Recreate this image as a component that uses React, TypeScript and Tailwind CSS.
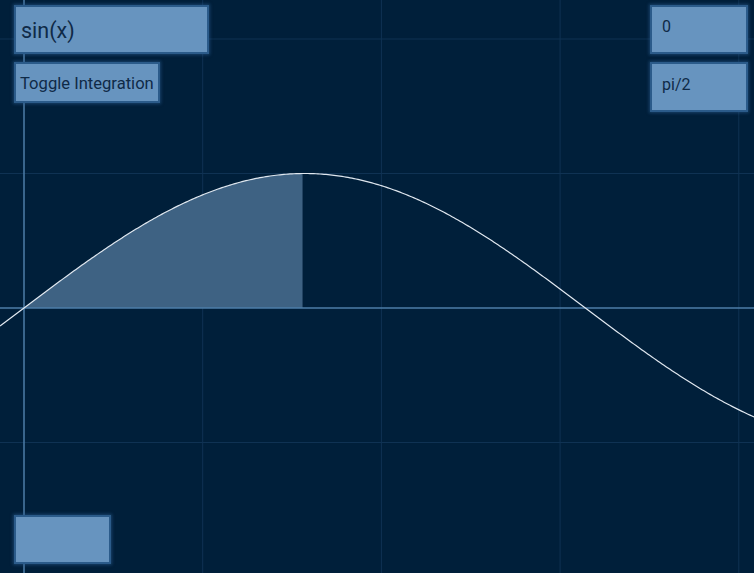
import { useMemo, useState } from "react";

const W = 754;
const H = 573;
const OX = 24;
const OY = 308;
const SX = 178.7;
const SY = 134.5;

const toPx = (x: number, y: number) => [OX + x * SX, OY - y * SY] as const;

function Graph({ integrate }: { integrate: boolean }) {
  const curve = useMemo(() => {
    const pts: string[] = [];
    for (let px = 0; px <= W; px += 2) {
      const x = (px - OX) / SX;
      const [, py] = toPx(x, Math.sin(x));
      pts.push(`${px},${py.toFixed(2)}`);
    }
    return pts.join(" ");
  }, []);

  // shaded area under the curve between the two bounds
  const area = useMemo(() => {
    const a = 0;
    const b = Math.PI / 2 - 0.012;
    const pts: string[] = [];
    const n = 60;
    for (let i = 0; i <= n; i++) {
      const x = a + ((b - a) * i) / n;
      const [px, py] = toPx(x, Math.sin(x));
      pts.push(`${px.toFixed(2)},${py.toFixed(2)}`);
    }
    const [bx] = toPx(b, 0);
    const [ax] = toPx(a, 0);
    return `${pts.join(" ")} ${bx},${OY} ${ax},${OY}`;
  }, []);

  const vlines = [-1, 1, 2, 3, 4].map((k) => OX + k * SX);
  const hlines = [-2, -1, 1, 2].map((k) => OY - k * SY);

  return (
    <svg width={W} height={H} viewBox={`0 0 ${W} ${H}`} className="absolute inset-0">
      <rect width={W} height={H} fill="#001f3a" />
      {vlines.map((x) => (
        <line key={`v${x}`} x1={x} y1={0} x2={x} y2={H} stroke="#0f3253" strokeWidth={1} />
      ))}
      {hlines.map((y) => (
        <line key={`h${y}`} x1={0} y1={y} x2={W} y2={y} stroke="#0f3253" strokeWidth={1} />
      ))}
      {integrate && <polygon points={area} fill="#3e6283" />}
      <line x1={0} y1={OY} x2={W} y2={OY} stroke="#4d7ea9" strokeWidth={1.5} />
      <line x1={OX} y1={0} x2={OX} y2={H} stroke="#4d7ea9" strokeWidth={1.5} />
      <polyline points={curve} fill="none" stroke="#dfe7ef" strokeWidth={1.2} />
    </svg>
  );
}

const box =
  "border-2 border-[#2b5b8a] bg-[#6794bf] text-[#0f2a47] shadow-[0_0_3px_1px_rgba(40,90,140,0.6)] outline-none";

export default function App() {
  const [expr, setExpr] = useState("sin(x)");
  const [from, setFrom] = useState("0");
  const [to, setTo] = useState("pi/2");
  const [integrate, setIntegrate] = useState(true);
  const [extra, setExtra] = useState("");

  return (
    <div
      className="relative h-[573px] w-[754px] overflow-hidden bg-[#001f3a]"
      style={{ fontFamily: "Roboto, 'Liberation Sans', sans-serif" }}
    >
      <Graph integrate={integrate} />
      <div className="relative flex h-full flex-col justify-between pt-[5px] pb-[9px] pl-[14px] pr-[6px]">
        <div className="flex items-start justify-between">
          <div className="flex flex-col gap-[8px]">
            <input
              value={expr}
              onChange={(e) => setExpr(e.target.value)}
              className={`${box} h-[49px] w-[195px] px-[5px] pt-[2px] text-[21.5px]`}
            />
            <button
              onClick={() => setIntegrate((p) => !p)}
              className={`${box} h-[41px] w-[146px] whitespace-nowrap pl-[4px] pt-[3px] text-left text-[16.6px]`}
            >
              Toggle Integration
            </button>
          </div>
          <div className="flex flex-col gap-[8px]">
            <input
              value={from}
              onChange={(e) => setFrom(e.target.value)}
              className={`${box} h-[49px] w-[98px] px-[10px] pb-[6px] text-[16px]`}
            />
            <input
              value={to}
              onChange={(e) => setTo(e.target.value)}
              className={`${box} h-[50px] w-[98px] px-[10px] pb-[6px] text-[16px]`}
            />
          </div>
        </div>
        <div>
          <input
            value={extra}
            onChange={(e) => setExtra(e.target.value)}
            className={`${box} h-[49px] w-[97px] px-[5px] text-[16px]`}
          />
        </div>
      </div>
    </div>
  );
}
